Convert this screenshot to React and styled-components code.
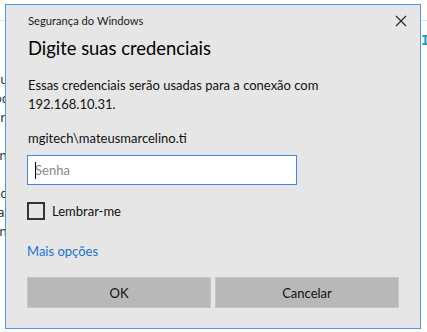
import React from "react";
import styled, { createGlobalStyle } from "styled-components";

const Global = createGlobalStyle`
  html, body { margin: 0; padding: 0; background: #ffffff; overflow: hidden; }
  body { width: 427px; height: 332px; font-family: Lato, "Noto Sans", sans-serif; }
`;

const Page = styled.div`
  position: relative;
  width: 427px;
  height: 332px;
  overflow: hidden;
  background: #ffffff;
`;

const Header = styled.div`
  display: flex;
  align-items: center;
  gap: 18px;
  margin-top: -34px;
  padding-left: 33px;
  height: 40px;
  border-bottom: 1px solid #e3e3e3;
  padding-bottom: 14px;
`;

const Logo = styled.div`
  width: 40px;
  height: 40px;
  border-radius: 50%;
  background: radial-gradient(circle at 40% 40%, #2f5fd6, #0b2a9e);
`;

const HeaderTitle = styled.div`
  font-family: "Liberation Sans", Arial, sans-serif;
  font-weight: bold;
  font-size: 34px;
  color: #0d2ea8;
  white-space: nowrap;
`;

const SideText = styled.div`
  position: absolute;
  left: -6px;
  top: 70px;
  font-family: "Noto Sans", sans-serif;
  font-size: 13px;
  line-height: 19px;
  color: #333;
`;

const RightLink = styled.div`
  position: absolute;
  left: 421px;
  top: 33px;
  font-family: "Liberation Mono", monospace;
  font-weight: bold;
  font-size: 14px;
  color: #1b9bc7;
`;

const Dialog = styled.div`
  position: absolute;
  left: 5px;
  top: 4px;
  width: 416px;
  height: 325px;
  box-sizing: border-box;
  background: #e6e6e6;
  border: 1px solid #4a9ae6;
  display: flex;
  flex-direction: column;
  padding: 0 12px 0 21px;
  color: #000;
  font-family: Lato, "Noto Sans", sans-serif;
`;

const TitleBar = styled.div`
  display: flex;
  align-items: center;
  justify-content: space-between;
  height: 30px;
`;

const WindowTitle = styled.div`
  font-size: 11.2px;
  color: #1a1a1a;
  padding-left: 1px;
`;

const Close = styled.div`
  width: 14px;
  height: 14px;
  display: flex;
  align-items: center;
  justify-content: center;
  padding-top: 2px;
`;

const Heading = styled.div`
  font-size: 18.4px;
  line-height: 26px;
  color: #000;
  padding-left: 1px;
`;

const Text = styled.div`
  font-size: 13px;
  line-height: 19px;
  margin-top: ${(p) => p.$gap}px;
  color: #111;
  padding-left: 1px;
`;

const Input = styled.div`
  margin-top: 7px;
  width: 270px;
  height: 30px;
  box-sizing: border-box;
  background: #fff;
  border: 1px solid #3b8be0;
  display: flex;
  align-items: center;
  padding-left: 7px;
  font-size: 13px;
  color: #8a8a8a;
`;

const Caret = styled.span`
  display: inline-block;
  width: 1px;
  height: 17px;
  background: #000;
  margin-right: -1px;
`;

const CheckRow = styled.label`
  display: flex;
  align-items: center;
  gap: 7px;
  margin-top: 17px;
  font-size: 13px;
  color: #111;
`;

const Box = styled.span`
  width: 14px;
  height: 14px;
  border: 2px solid #333;
  background: transparent;
`;

const Link = styled.div`
  margin-top: 22px;
  font-size: 13px;
  line-height: 19px;
  color: #1a73d4;
`;

const Buttons = styled.div`
  display: flex;
  gap: 4px;
  margin-top: 16px;
  width: 372px;
`;

const Button = styled.div`
  flex: 1;
  height: 31px;
  box-sizing: border-box;
  background: #b8b8b8;
  border: 1px solid #c6c6c6;
  display: flex;
  align-items: center;
  justify-content: center;
  font-size: 13px;
  color: #111;
`;

export default function App() {
  return (
    <>
      <Global />
      <Page>
        <Header>
          <Logo />
          <HeaderTitle>Área de Trabalho Remota</HeaderTitle>
        </Header>
        <SideText>
          su<br />od<br />cr<br /><br />rm<br /><br />cc<br />la<br />rm
        </SideText>
        <RightLink>Ir</RightLink>
        <Dialog>
          <TitleBar>
            <WindowTitle>Segurança do Windows</WindowTitle>
            <Close>
              <svg width="12" height="12" viewBox="0 0 12 12">
                <path d="M1 1 L11 11 M11 1 L1 11" stroke="#222" strokeWidth="1.1" fill="none" />
              </svg>
            </Close>
          </TitleBar>
          <Heading>Digite suas credenciais</Heading>
          <Text $gap={15}>
            Essas credenciais serão usadas para a conexão com
            <br />
            192.168.10.31.
          </Text>
          <Text $gap={15}>mgitech\mateusmarcelino.ti</Text>
          <Input>
            <Caret />
            Senha
          </Input>
          <CheckRow>
            <Box />
            Lembrar-me
          </CheckRow>
          <Link>Mais opções</Link>
          <Buttons>
            <Button>OK</Button>
            <Button>Cancelar</Button>
          </Buttons>
        </Dialog>
      </Page>
    </>
  );
}
